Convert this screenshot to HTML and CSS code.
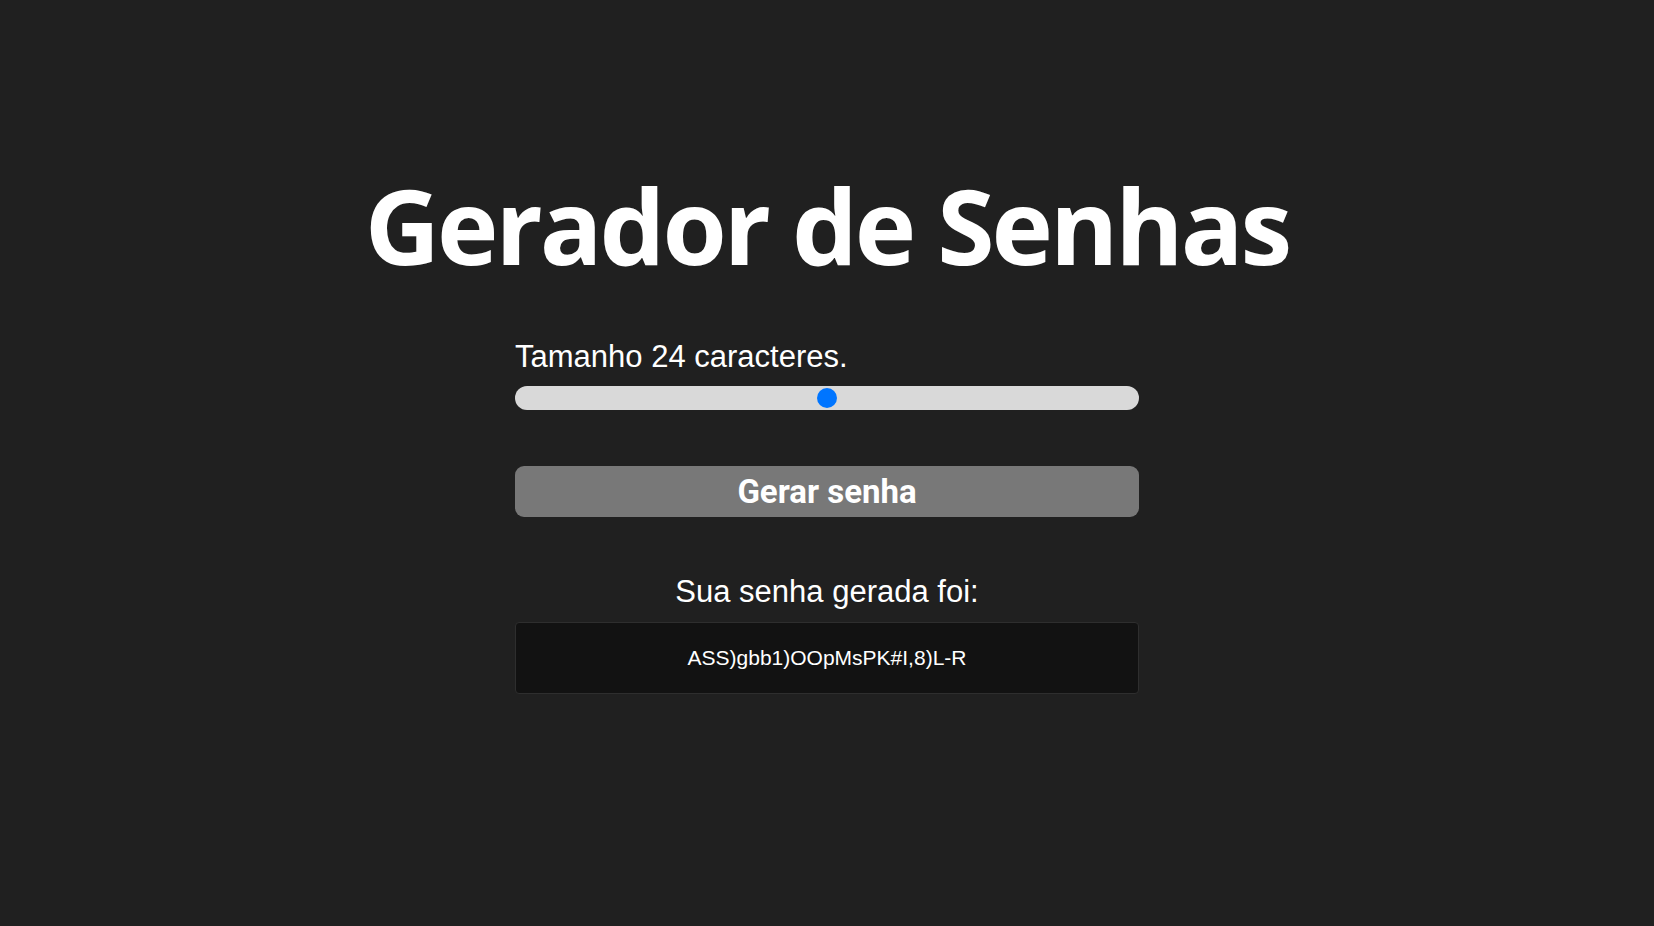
FILE: index.html
```html
<!DOCTYPE html>
<html lang="pt-BR">
<head>
<meta charset="utf-8">
<title>Gerador de Senhas</title>
<link rel="stylesheet" href="styles.css">
</head>
<body>
<main class="page">
  <h1 class="title">Gerador de Senhas</h1>
  <section class="panel">
    <p class="size-label">Tamanho <span>24</span> caracteres.</p>
    <input class="slider" type="range" min="6" max="42" value="24">
    <button class="generate">Gerar senha</button>
    <p class="result-label">Sua senha gerada foi:</p>
    <div class="result-box">ASS)gbb1)OOpMsPK#I,8)L-R</div>
  </section>
</main>
</body>
</html>
```

FILE: styles.css
```css
* { box-sizing: border-box; }

html, body {
  margin: 0;
  padding: 0;
  background: #202020;
  color: #ffffff;
  font-family: "Liberation Sans", Arial, sans-serif;
}

.page {
  min-height: 100vh;
  display: flex;
  flex-direction: column;
  align-items: center;
  padding-top: 173px;
}

.title {
  margin: 0;
  font-family: "Open Sans", "Noto Sans", sans-serif;
  font-weight: 700;
  font-size: 104px;
  line-height: 104px;
  letter-spacing: -3px;
}

.panel {
  width: 624px;
  margin-top: 62px;
  display: flex;
  flex-direction: column;
}

.size-label {
  margin: 0;
  font-size: 31px;
  line-height: 36px;
}

.slider {
  -webkit-appearance: none;
  appearance: none;
  width: 100%;
  height: 24px;
  margin: 11px 0 0 0;
  border-radius: 12px;
  background: #d9d9d9;
  outline: none;
}

.slider::-webkit-slider-thumb {
  -webkit-appearance: none;
  appearance: none;
  width: 20px;
  height: 20px;
  border-radius: 50%;
  background: #0075ff;
  border: none;
}

.generate {
  margin-top: 56px;
  height: 51px;
  border: none;
  border-radius: 9px;
  background: #787878;
  color: #ffffff;
  font-family: Roboto, "Liberation Sans", sans-serif;
  font-weight: 700;
  font-size: 33px;
  line-height: 1;
}

.result-label {
  margin: 57px 0 0 0;
  text-align: center;
  font-size: 31px;
  line-height: 36px;
}

.result-box {
  margin-top: 12px;
  height: 72px;
  display: flex;
  align-items: center;
  justify-content: center;
  background: #121212;
  border: 1px solid #2e2e2e;
  border-radius: 4px;
  font-size: 21px;
}
```
